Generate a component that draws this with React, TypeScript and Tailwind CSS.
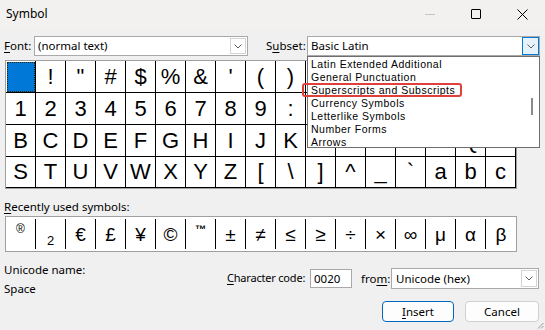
const ui = { fontFamily: '"Noto Sans", "Open Sans", sans-serif' };
const glyphFont = { fontFamily: '"Liberation Sans", Arial, sans-serif' };

const rows: string[][] = [
  [" ", "!", '"', "#", "$", "%", "&", "'", "(", ")", "*", "+", ",", "-", ".", "/", "0"],
  ["1", "2", "3", "4", "5", "6", "7", "8", "9", ":", ";", "<", "=", ">", "?", "@", "A"],
  ["B", "C", "D", "E", "F", "G", "H", "I", "J", "K", "L", "M", "N", "O", "P", "Q", "R"],
  ["S", "T", "U", "V", "W", "X", "Y", "Z", "[", "\\", "]", "^", "_", "`", "a", "b", "c"],
];

const recent = ["®", "₂", "€", "£", "¥", "©", "™", "±", "≠", "≤", "≥", "÷", "×", "∞", "μ", "α", "β"];

const subsets = [
  "Latin Extended Additional",
  "General Punctuation",
  "Superscripts and Subscripts",
  "Currency Symbols",
  "Letterlike Symbols",
  "Number Forms",
  "Arrows",
];

function Chevron() {
  return (
    <svg width="8" height="5" viewBox="0 0 8 5" fill="none">
      <path d="M0.5 0.5 L4 4 L7.5 0.5" stroke="#606060" strokeWidth="1" />
    </svg>
  );
}

function Combo({ value, width, active }: { value: string; width: string; active?: boolean }) {
  return (
    <div className={`flex h-[20px] items-center border border-[#a9a9a9] bg-white ${width}`}>
      <span className="flex-1 whitespace-nowrap pl-[3px] text-[11.5px] leading-[18px] text-black">{value}</span>
      <div
        className={
          active
            ? "flex h-[18px] w-[17px] items-center justify-center border border-[#0078d4] bg-[#e5f1fb]"
            : "mr-[1px] flex h-[16px] w-[16px] items-center justify-center border border-[#d4d4d4] bg-white"
        }
      >
        <Chevron />
      </div>
    </div>
  );
}

function RecentCell({ ch, last }: { ch: string; last: boolean }) {
  let inner = <span className="text-[19px] leading-none">{ch}</span>;
  if (ch === "®") inner = <span className="mb-[10px] text-[12px] leading-none">®</span>;
  if (ch === "™") inner = <span className="mb-[10px] text-[11px] font-bold leading-none">™</span>;
  if (ch === "₂") inner = <span className="mt-[12px] text-[13px] leading-none">2</span>;
  return (
    <div
      className={`flex h-full w-[30px] items-center justify-center text-black ${last ? "" : "border-r border-black"}`}
      style={glyphFont}
    >
      {inner}
    </div>
  );
}

export default function App() {
  return (
    <div className="relative h-[330px] w-[545px] overflow-hidden bg-[#f0f0f0] text-[11.5px] text-black" style={ui}>
      {/* title bar */}
      <div className="flex h-[28px] items-center bg-[#f3f1f0]">
        <span className="pl-[6px] text-[12px]">Symbol</span>
        <div className="ml-auto flex h-full">
          <div className="flex w-[46px] items-center justify-center">
            <div className="h-[1px] w-[10px] bg-[#c4c4c4]" />
          </div>
          <div className="flex w-[46px] items-center justify-center">
            <div className="h-[10px] w-[10px] rounded-[1px] border border-black" />
          </div>
          <div className="flex w-[46px] items-center justify-center">
            <svg width="11" height="11" viewBox="0 0 11 11">
              <path d="M0.5 0.5 L10.5 10.5 M10.5 0.5 L0.5 10.5" stroke="#000" strokeWidth="1" />
            </svg>
          </div>
        </div>
      </div>

      {/* font / subset row */}
      <div className="mt-[8px] flex h-[20px] items-center whitespace-nowrap pl-[4px]">
        <span className="w-[30px]">
          <span className="underline underline-offset-2">F</span>ont:
        </span>
        <Combo value="(normal text)" width="w-[214px]" />
        <span className="ml-[18px] w-[41px]">
          S<span className="underline underline-offset-2">u</span>bset:
        </span>
        <Combo value="Basic Latin" width="w-[233px]" active />
      </div>

      {/* character grid */}
      <div className="ml-[5px] mt-[4px] w-[512px] border border-[#a0a0a0] bg-white">
        {rows.map((row, ri) => (
          <div key={ri} className="flex">
            {row.map((ch, ci) => (
              <div
                key={ci}
                className={`flex w-[30px] items-center justify-center border-b border-r border-black text-[22px] leading-none ${ri === 3 ? "h-[31px]" : "h-[32px]"}`}
                style={glyphFont}
              >
                {ri === 0 && ci === 0 ? (
                  <div className="h-[30px] w-[28px] border border-dotted border-[#3a2400] bg-[#0078d7]" />
                ) : (
                  ch
                )}
              </div>
            ))}
          </div>
        ))}
      </div>

      {/* recently used */}
      <div className="mt-[10px] pl-[4px] leading-[16px]">
        <span className="underline underline-offset-2">R</span>ecently used symbols:
      </div>
      <div className="ml-[5px] mt-[1px] flex h-[36px] w-[512px] border border-[#a0a0a0] bg-white py-[2px]">
        {recent.map((ch, i) => (
          <RecentCell key={i} ch={ch} last={i === recent.length - 1} />
        ))}
      </div>

      {/* bottom section */}
      <div className="mt-[10px] flex whitespace-nowrap">
        <div className="pl-[4px] leading-[16px]">
          <div>Unicode name:</div>
          <div className="mt-[3px]">Space</div>
        </div>
        <div className="ml-auto mr-[6px] w-[312px] pt-[6px]">
          <div className="flex h-[21px] items-center">
            <span className="w-[83px] text-[11px] tracking-[-0.2px]">
              <span className="underline underline-offset-2">C</span>haracter code:
            </span>
            <div className="flex h-[19px] w-[42px] items-center border border-[#a9a9a9] bg-white pl-[3px]">0020</div>
            <span className="ml-[9px] w-[30px]">
              fro<span className="underline underline-offset-2">m</span>:
            </span>
            <div className="flex h-[21px] w-[148px] items-center border border-[#a9a9a9] bg-white">
              <span className="flex-1 pl-[4px]">Unicode (hex)</span>
              <div className="mr-[1px] flex h-[17px] w-[16px] items-center justify-center border border-[#d4d4d4] bg-white">
                <Chevron />
              </div>
            </div>
          </div>
          <div className="mt-[12px] flex justify-end gap-[11px]">
            <button className="flex h-[21px] w-[72px] items-center justify-center rounded-[4px] border border-[#0067c0] bg-[#fdfdfd]">
              <span className="underline underline-offset-2">I</span>nsert
            </button>
            <button className="flex h-[21px] w-[74px] items-center justify-center rounded-[4px] border border-[#d0d0d0] bg-[#fdfdfd]">
              Cancel
            </button>
          </div>
        </div>
      </div>

      {/* resize grip */}
      <svg className="absolute bottom-[1px] right-[1px]" width="8" height="8" viewBox="0 0 8 8">
        <path d="M7.5 2 L2 7.5 M7.5 5 L5 7.5" stroke="#9a9a9a" strokeWidth="1" />
      </svg>

      {/* open subset dropdown list */}
      <div
        className="absolute left-[307px] top-[56px] h-[92px] w-[233px] border border-[#6e6e6e] bg-white pt-[1px]"
        style={glyphFont}
      >
        {subsets.map((s) => (
          <div key={s} className="h-[13px] whitespace-nowrap pl-[3px] text-[10.5px] leading-[13px] tracking-[0.5px] text-black">
            {s}
          </div>
        ))}
        <div className="absolute left-[223px] top-[41px] h-[17px] w-[2px] bg-[#8a8a8a]" />
      </div>
      {/* highlight around the chosen subset */}
      <div className="absolute left-[302px] top-[83px] h-[14px] w-[160px] rounded-[3px] border-2 border-[#e0403c]" />
    </div>
  );
}
